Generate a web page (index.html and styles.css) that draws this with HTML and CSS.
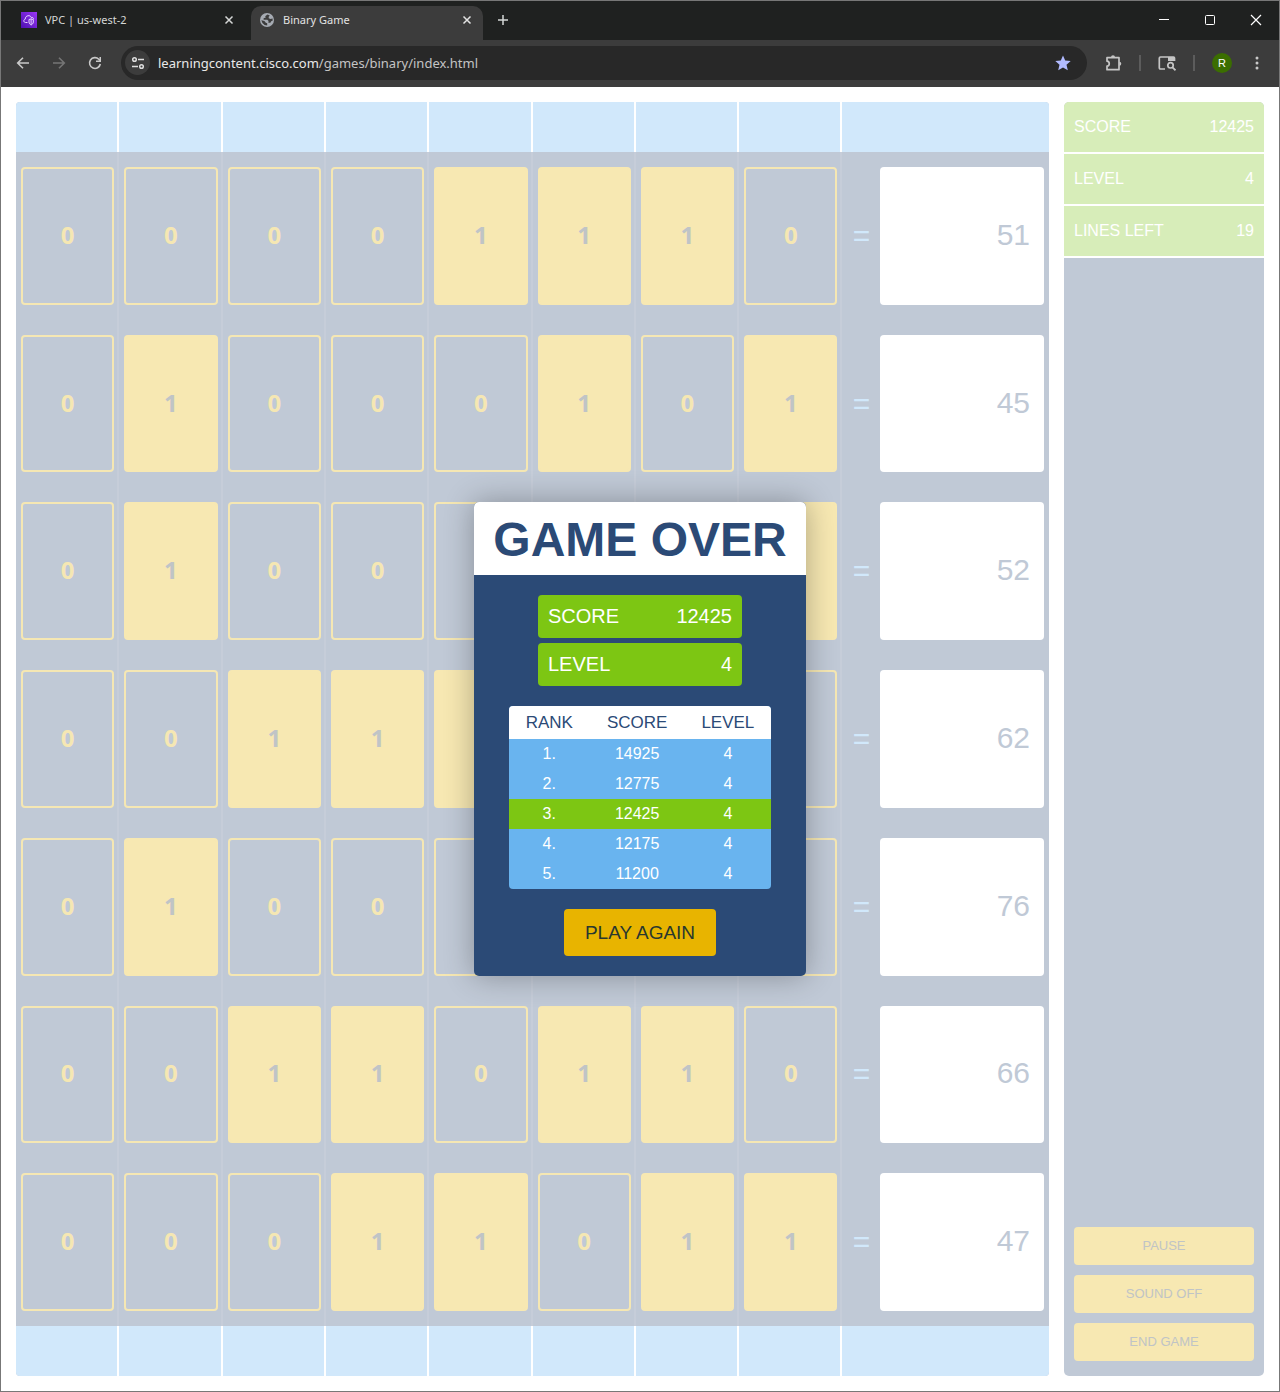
FILE: index.html
```html
<!DOCTYPE html>
<html lang="en">
<head>
<meta charset="utf-8">
<meta name="viewport" content="width=device-width, initial-scale=1">
<title>Binary Game</title>
<link rel="stylesheet" href="styles.css">
</head>
<body>
<div class="window">
  <header class="tabstrip">
    <div class="tab">
      <svg class="favicon" viewBox="0 0 16 16"><defs><linearGradient id="vpc" x1="0" y1="1" x2="1" y2="0"><stop offset="0" stop-color="#4d10b0"/><stop offset="1" stop-color="#9a35f5"/></linearGradient></defs><rect width="16" height="16" fill="url(#vpc)"/><path d="M6.500 10.500H4.500C2.500 10.500 2.200 7.600 4.200 7.200C4.200 3.200 9.400 2.500 10.300 5.600C11.600 5 12.600 5.800 12.600 6.800M8 7.500C9 7.500 9.500 7 10 6.700C10.600 7 11.200 7.500 12.300 7.500V10C12.300 11.600 11 12.500 10.100 13C9.200 12.500 8 11.600 8 10ZM10.100 7V12.800" fill="none" stroke="#e7d5ff"/></svg>
      <span class="tab-title">VPC | us-west-2</span>
      <button class="icon-button tab-close" aria-label="Close tab"><svg width="16" height="16" viewBox="0 0 16 16"><path d="M4.500 4.500l7 7M11.500 4.500l-7 7" stroke="#d5d7d6" stroke-width="1.500"/></svg></button>
    </div>
    <div class="tab active">
      <svg class="favicon" viewBox="0 0 16 16"><circle cx="8" cy="8" r="7" fill="#a6abb3"/><path d="M8.500 2.600L6.200 4.300L6.800 5.500L4.600 6.300V7.700H8.300L9.600 9L9.300 10.700H11.400L12.200 9.300L13.600 8.700V6.500L11.500 7L9.700 6.200V4.700L10.800 3.400ZM2.300 8.200L5.400 9.100L6.800 10.800L8.200 11.200V13.600L5.600 13Q3 11.500 2.300 8.200Z" fill="#3c3c3c"/></svg>
      <span class="tab-title">Binary Game</span>
      <button class="icon-button tab-close" aria-label="Close tab"><svg width="16" height="16" viewBox="0 0 16 16"><path d="M4.500 4.500l7 7M11.500 4.500l-7 7" stroke="#e3e3e3" stroke-width="1.500"/></svg></button>
    </div>
    <button class="icon-button new-tab" aria-label="New tab"><svg width="16" height="16" viewBox="0 0 16 16"><path d="M8 3v10M3 8h10" stroke="#d5d7d6" stroke-width="1.500"/></svg></button>
    <div class="window-controls">
      <button class="icon-button" aria-label="Minimize"><svg width="16" height="16" viewBox="0 0 16 16"><path d="M3 7.500h10" stroke="#fff"/></svg></button>
      <button class="icon-button" aria-label="Maximize"><svg width="16" height="16" viewBox="0 0 16 16"><rect x="3.500" y="3.500" width="9" height="9" rx="1" fill="none" stroke="#fff"/></svg></button>
      <button class="icon-button" aria-label="Close"><svg width="16" height="16" viewBox="0 0 16 16"><path d="M3 3l10 10M13 3L3 13" stroke="#fff" stroke-width="1.200"/></svg></button>
    </div>
  </header>
  <nav class="toolbar">
    <button class="icon-button" aria-label="Back"><svg width="16" height="16" viewBox="0 0 16 16" fill="none" stroke="#c9c9c9" stroke-width="1.600"><path d="M14 8H3M8 2.700L2.700 8L8 13.300"/></svg></button>
    <button class="icon-button" aria-label="Forward"><svg width="16" height="16" viewBox="0 0 16 16" fill="none" stroke="#757575" stroke-width="1.600"><path d="M2 8h11M8 2.700L13.300 8L8 13.300"/></svg></button>
    <button class="icon-button" aria-label="Reload"><svg width="16" height="16" viewBox="0 0 16 16"><path d="M13.300 9A5.400 5.400 0 1 1 11.800 4.200L13 5.400" fill="none" stroke="#c9c9c9" stroke-width="1.600"/><path d="M14 2v5H9V5.500h3.500V2z" fill="#c9c9c9"/></svg></button>
    <div class="address">
      <button class="icon-button site-info" aria-label="Site information"><svg width="16" height="16" viewBox="0 0 16 16" fill="none" stroke="#dedede" stroke-width="1.500"><circle cx="4.500" cy="4.500" r="1.800"/><path d="M8 4.500h6M2 11.500h6"/><circle cx="11.500" cy="11.500" r="1.800"/></svg></button>
      <a class="url" href="#">learningcontent.cisco.com<span class="path">/games/binary/index.html</span></a>
      <button class="icon-button" aria-label="Edit bookmark"><svg width="16" height="16" viewBox="0 0 16 16"><path d="M8 .5l2.200 5.100 5.500.5-4.200 3.700 1.300 5.500L8 12.400l-4.800 2.900 1.300-5.500L.3 6.100l5.500-.5z" fill="#b1baff"/></svg></button>
    </div>
    <div class="tools">
      <button class="icon-button" aria-label="Extensions"><svg width="18" height="18" viewBox="0 0 18 18"><path d="M3 3.700H15V15.700H3V12.200C6 11.800 6 7.600 3 7.200Z" fill="none" stroke="#c5c5c5" stroke-width="1.700" stroke-linejoin="round"/><path d="M7 3.300a2 2 0 0 1 4 0zM15.300 7.700a2 2 0 0 1 0 4z" fill="#c5c5c5"/></svg></button>
      <span class="divider"></span>
      <button class="icon-button" aria-label="Search side panel"><svg width="18" height="18" viewBox="0 0 18 18" fill="none" stroke="#c5c5c5" stroke-width="1.700"><path d="M7 15H2.500Q1.300 15 1.300 13.800V4.200Q1.300 3 2.500 3H15.500Q16.500 3 16.500 4V7"/><path d="M10 3h6.500v4H10z" fill="#c5c5c5" stroke="none"/><circle cx="12.500" cy="11.300" r="2.700"/><path d="M14.500 13.300L17.500 16.300"/></svg></button>
      <span class="divider"></span>
      <button class="avatar" aria-label="Profile">R</button>
      <button class="icon-button" aria-label="Menu"><svg width="16" height="16" viewBox="0 0 16 16" fill="#c9c9c9"><circle cx="8" cy="3" r="1.500"/><circle cx="8" cy="8" r="1.500"/><circle cx="8" cy="13" r="1.500"/></svg></button>
    </div>
  </nav>
  <main class="page">
    <section class="board" id="board" aria-label="Game board"></section>
    <aside class="sidebar">
      <dl class="stats">
        <div class="stat"><dt>SCORE</dt><dd>12425</dd></div>
        <div class="stat"><dt>LEVEL</dt><dd>4</dd></div>
        <div class="stat"><dt>LINES LEFT</dt><dd>19</dd></div>
      </dl>
      <div class="actions">
        <button>PAUSE</button>
        <button>SOUND OFF</button>
        <button>END GAME</button>
      </div>
    </aside>
    <div class="overlay">
      <section class="dialog" role="dialog" aria-labelledby="dialog-title">
        <h1 class="dialog-title" id="dialog-title">GAME OVER</h1>
        <div class="dialog-body">
          <dl class="results">
            <div class="result"><dt>SCORE</dt><dd>12425</dd></div>
            <div class="result"><dt>LEVEL</dt><dd>4</dd></div>
          </dl>
          <table class="ranking">
            <thead><tr><th>RANK</th><th>SCORE</th><th>LEVEL</th></tr></thead>
            <tbody>
              <tr><td>1.</td><td>14925</td><td>4</td></tr>
              <tr><td>2.</td><td>12775</td><td>4</td></tr>
              <tr class="current"><td>3.</td><td>12425</td><td>4</td></tr>
              <tr><td>4.</td><td>12175</td><td>4</td></tr>
              <tr><td>5.</td><td>11200</td><td>4</td></tr>
            </tbody>
          </table>
          <button class="play-again">PLAY AGAIN</button>
        </div>
      </section>
    </div>
  </main>
</div>
<script src="game.js"></script>
</body>
</html>
```
FILE: game.js
```js
// "-" and "+" are an empty and a filled cell whose digit the dialog covers.
const lines = [
  ["00001110", 51],
  ["01000101", 45],
  ["0100---+", 52],
  ["0011+---", 62],
  ["0100----", 76],
  ["00110110", 66],
  ["00011011", 47]
];
const board = document.getElementById("board");
const edge = '<div class="edge">' + "<span></span>".repeat(9) + "</div>";
const renderBit = bit => {
  const on = bit === "1" || bit === "+";
  const digit = bit === "0" || bit === "1" ? bit : "";
  return `<div class="cell"><button class="bit${on ? " on" : ""}">${digit}</button></div>`;
};
const rows = lines.map(([bits, total]) =>
  `<div class="line">${[...bits].map(renderBit).join("")}<div class="answer"><span class="equals">=</span><output class="total">${total}</output></div></div>`
);
board.innerHTML = edge + rows.join("") + edge;
```
FILE: styles.css
```css
* {
  box-sizing: border-box;
}

body {
  margin: 0;
  font-family: "Liberation Sans", Arial, sans-serif;
}

button {
  margin: 0;
  padding: 0;
  border: 0;
  font-family: inherit;
  cursor: pointer;
}

dl,
dd,
h1 {
  margin: 0;
}

/* Browser window */
.window {
  display: flex;
  flex-direction: column;
  min-height: 100vh;
  border: 1px solid #777;
  background: #fff;
}

.tabstrip {
  display: flex;
  align-items: center;
  height: 39px;
  padding-bottom: 1px;
  background: #1f2120;
}

.tab {
  display: flex;
  align-items: center;
  gap: 8px;
  width: 250px;
  height: 100%;
  padding: 0 14px 0 20px;
  color: #d5d7d6;
  font: 11px/16px "Noto Sans", sans-serif;
}

.tab.active {
  width: 232px;
  height: 34px;
  align-self: flex-end;
  margin-bottom: -1px;
  padding: 0 8px 6px;
  border-radius: 10px 10px 0 0;
  background: #3c3c3c;
  color: #e3e3e3;
}

.favicon {
  flex: none;
  width: 16px;
  height: 16px;
}

.tab-title {
  flex: 1;
}

.icon-button {
  display: flex;
  align-items: center;
  justify-content: center;
  background: none;
}

.new-tab {
  margin-left: 12px;
}

.window-controls {
  display: flex;
  gap: 30px;
  margin-left: auto;
  padding-right: 15px;
}

.toolbar {
  display: flex;
  align-items: center;
  gap: 20px;
  height: 47px;
  padding: 0 14px 2px;
  background: #3c3c3c;
}

.address {
  display: flex;
  flex: 1;
  align-items: center;
  gap: 8px;
  height: 34px;
  margin: 0 -3px 0 -2px;
  padding: 0 16px 0 4px;
  border-radius: 17px;
  background: #282828;
}

.site-info {
  width: 25px;
  height: 25px;
  border-radius: 50%;
  background: #3c3c3c;
}

.url {
  flex: 1;
  color: #e8e8e8;
  font: 13px/20px "Noto Sans", sans-serif;
  text-decoration: none;
}

.path {
  color: #c4c4c4;
}

.tools {
  display: flex;
  align-items: center;
  gap: 17px;
}

.divider {
  width: 2px;
  height: 16px;
  background: #5c5c5c;
}

.avatar {
  width: 20px;
  height: 20px;
  border-radius: 50%;
  background: #3b6e00;
  color: #fff;
  font-size: 11px;
}

/* Game */
.page {
  position: relative;
  display: flex;
  flex: 1;
  gap: 15px;
  padding: 15px;
}

.board {
  display: flex;
  flex: 1;
  flex-direction: column;
  overflow: hidden;
  border-radius: 4px;
  background: #c0c9d6;
}

.edge,
.line {
  display: grid;
  grid-template-columns: repeat(8, 1fr) 2fr;
}

.edge {
  height: 50px;
  background: #d1e8fb;
}

.edge span:not(:last-child) {
  border-right: 2px solid #fff;
}

.line {
  flex: 1;
  min-height: 80px;
}

.cell {
  display: flex;
  padding: 15px 3px 15px 5px;
  border-right: 2px solid #c6cdd9;
}

.bit {
  flex: 1;
  padding-bottom: 2px;
  border: 2px solid #f5e7b3;
  border-radius: 4px;
  background: none;
  color: #f5e7b3;
  font: bold 24px/32px "Noto Sans", sans-serif;
}

.bit.on {
  border-color: #f7e8b2;
  background: #f7e8b2;
  color: #c0c4c6;
}

.answer {
  display: flex;
  padding: 15px 5px 15px 0;
}

.equals {
  display: flex;
  flex: none;
  align-items: center;
  justify-content: center;
  width: 38px;
  color: #d1e8fb;
  font-size: 30px;
}

.total {
  display: flex;
  flex: 1;
  align-items: center;
  justify-content: flex-end;
  padding: 0 14px 2px 0;
  border-radius: 4px;
  background: #fff;
  color: #c0c9d6;
  font-size: 30px;
}

.sidebar {
  display: flex;
  flex: none;
  flex-direction: column;
  justify-content: space-between;
  width: 200px;
  overflow: hidden;
  border-radius: 5px;
  background: #c0c9d6;
}

.stat {
  display: flex;
  align-items: center;
  justify-content: space-between;
  height: 52px;
  padding: 0 10px;
  border-bottom: 2px solid #fff;
  background: #d7edb9;
  color: #fff;
  font-size: 16px;
}

.actions {
  display: flex;
  flex-direction: column;
  gap: 10px;
  padding: 0 10px 15px;
}

.actions button {
  height: 38px;
  padding-bottom: 2px;
  border-radius: 4px;
  background: #f7e8b2;
  color: #c0c4c6;
  font-size: 13px;
}

/* Dialog shown over the board */
.overlay {
  position: absolute;
  inset: 0;
  display: flex;
  align-items: center;
  justify-content: center;
}

.dialog {
  width: 332px;
  overflow: hidden;
  border-radius: 5px;
  background: #2b4a76;
  box-shadow: 0 0 30px rgba(0, 0, 0, 0.3);
}

.dialog-title {
  padding: 10px 0 7px;
  background: #fff;
  color: #2b4a76;
  font-size: 48px;
  line-height: 56px;
  text-align: center;
}

.dialog-body {
  display: flex;
  flex-direction: column;
  align-items: center;
  gap: 20px;
  padding: 20px;
}

.results {
  display: grid;
  gap: 5px;
  width: 204px;
}

.result {
  display: flex;
  align-items: center;
  justify-content: space-between;
  height: 43px;
  padding: 0 10px;
  border-radius: 4px;
  background: #7dc613;
  color: #fff;
  font-size: 20px;
}

.ranking {
  overflow: hidden;
  border-spacing: 0;
  border-radius: 4px;
  background: #69b4ef;
  color: #fff;
  font-size: 16px;
  line-height: 20px;
  text-align: center;
}

.ranking th {
  height: 33px;
  padding: 0 17px;
  background: #fff;
  color: #2b4a76;
  font-size: 17px;
  font-weight: normal;
}

.ranking td {
  height: 30px;
  padding: 0;
}

.current {
  background: #7dc613;
}

.play-again {
  width: 152px;
  height: 47px;
  border-radius: 4px;
  background: #e8b400;
  color: #29382f;
  font-size: 19px;
}
```
